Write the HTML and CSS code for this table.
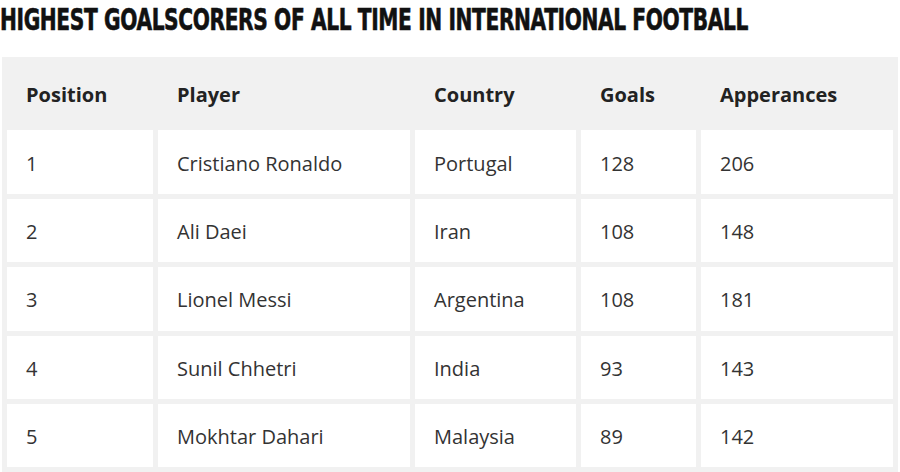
FILE: index.html
```html
<!DOCTYPE html>
<html>
<head>
<meta charset="utf-8">
<link rel="stylesheet" href="styles.css">
</head>
<body>
<h1 class="title"><span class="title-text">HIGHEST GOALSCORERS OF ALL TIME IN INTERNATIONAL FOOTBALL</span></h1>
<table class="scores">
  <colgroup>
    <col class="c-pos"><col class="c-player"><col class="c-country"><col class="c-goals"><col class="c-apps">
  </colgroup>
  <thead>
    <tr><th>Position</th><th>Player</th><th>Country</th><th>Goals</th><th>Apperances</th></tr>
  </thead>
  <tbody>
    <tr><td>1</td><td>Cristiano Ronaldo</td><td>Portugal</td><td>128</td><td>206</td></tr>
    <tr><td>2</td><td>Ali Daei</td><td>Iran</td><td>108</td><td>148</td></tr>
    <tr><td>3</td><td>Lionel Messi</td><td>Argentina</td><td>108</td><td>181</td></tr>
    <tr><td>4</td><td>Sunil Chhetri</td><td>India</td><td>93</td><td>143</td></tr>
    <tr><td>5</td><td>Mokhtar Dahari</td><td>Malaysia</td><td>89</td><td>142</td></tr>
  </tbody>
</table>
</body>
</html>
```
FILE: styles.css
```css
html, body {
  margin: 0;
  padding: 0;
  background: #ffffff;
}
body {
  font-family: "Open Sans", "Noto Sans", sans-serif;
  color: #333333;
  overflow: hidden;
}
.title {
  margin: 0;
  height: 57px;
  padding-top: 3px;
  box-sizing: border-box;
  overflow: hidden;
  font-family: "DejaVu Sans Condensed", "DejaVu Sans", sans-serif;
  font-stretch: condensed;
  font-weight: 700;
  font-size: 30px;
  line-height: 34px;
  color: #111111;
  white-space: nowrap;
}
.title-text {
  display: inline-block;
  transform: scaleX(0.748);
  transform-origin: left center;
  letter-spacing: -0.5px;
  -webkit-text-stroke: 0.6px #111111;
}
.scores {
  margin-left: 2px;
  width: 896px;
  background: #f1f1f1;
  border-collapse: separate;
  border-spacing: 5px;
  table-layout: fixed;
  font-size: 20px;
}
.c-pos { width: 146px; }
.c-player { width: 252px; }
.c-country { width: 161px; }
.c-goals { width: 115px; }
.c-apps { width: 192px; }
.scores th, .scores td {
  height: 63.4px;
  padding: 2px 0 0 19px;
  text-align: left;
  vertical-align: middle;
  box-sizing: border-box;
}
.scores th {
  font-weight: 700;
  color: #222222;
  background: #f1f1f1;
}
.scores td {
  background: #ffffff;
  color: #333333;
}
```
